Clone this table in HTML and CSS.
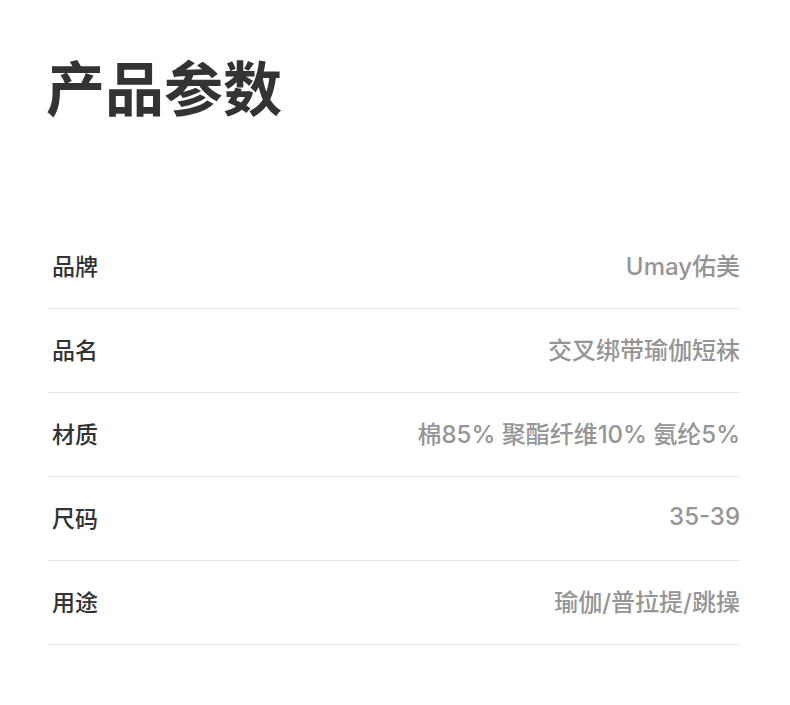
FILE: index.html
```html
<!DOCTYPE html>
<html lang="zh">
<head>
<meta charset="utf-8">
<link rel="stylesheet" href="styles.css">
</head>
<body>
<div class="page">
  <h1 class="title">产品参数</h1>
  <div class="table">
    <div class="row"><span class="label">品牌</span><span class="value">Umay佑美</span></div>
    <div class="row"><span class="label">品名</span><span class="value">交叉绑带瑜伽短袜</span></div>
    <div class="row"><span class="label">材质</span><span class="value">棉85% 聚酯纤维10% 氨纶5%</span></div>
    <div class="row"><span class="label">尺码</span><span class="value">35-39</span></div>
    <div class="row"><span class="label">用途</span><span class="value">瑜伽/普拉提/跳操</span></div>
  </div>
</div>
</body>
</html>
```
FILE: styles.css
```css
html, body {
  margin: 0;
  padding: 0;
  background: #ffffff;
}
body {
  font-family: "Noto Sans CJK SC", "Noto Sans", sans-serif;
}
.page {
  width: 790px;
  height: 705px;
  padding: 51px 50px 0 48px;
  box-sizing: border-box;
}
.title {
  margin: 0 0 0 -2px;
  font-size: 59px;
  line-height: 70px;
  font-weight: 700;
  color: #333333;
}
.table {
  margin-top: 104px;
}
.row {
  display: flex;
  justify-content: space-between;
  align-items: center;
  height: 79px;
  padding: 0 0 4px 4px;
  border-bottom: 1px solid #e6e6e6;
}
.label {
  font-size: 23px;
  font-weight: 500;
  color: #333333;
}
.value {
  font-family: "Inter", "Noto Sans CJK SC", sans-serif;
  font-size: 24px;
  font-weight: 500;
  color: #959595;
}
```
